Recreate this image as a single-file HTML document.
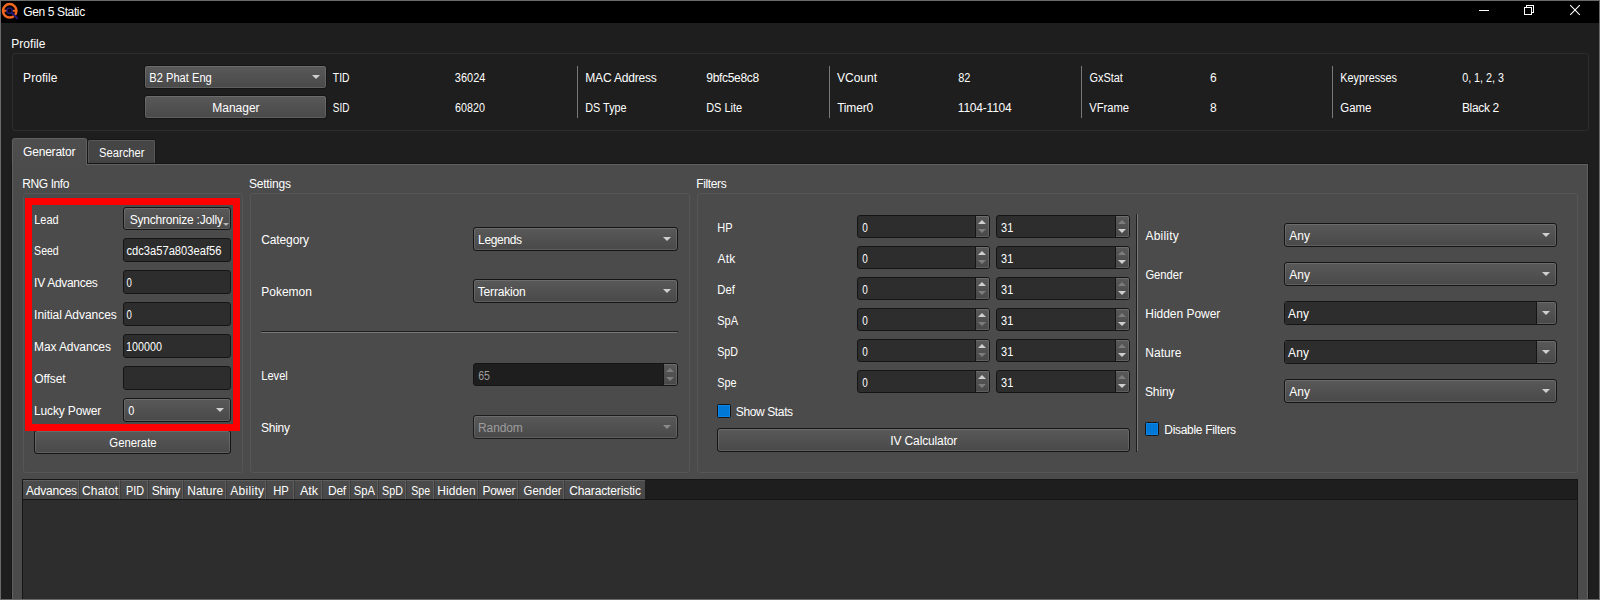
<!DOCTYPE html>
<html lang="en">
<head>
<meta charset="utf-8">
<title>Gen 5 Static</title>
<style>
html,body{margin:0;padding:0;}
body{width:1600px;height:600px;overflow:hidden;background:#1e1e1e;position:relative;font-family:"Liberation Sans",sans-serif;font-size:12px;color:#fff;}
.a{position:absolute;}
.t{position:absolute;white-space:nowrap;line-height:16px;height:16px;font-size:12px;color:#fff;transform-origin:0 0;}
.gb{position:absolute;box-sizing:border-box;border:1px solid #565656;border-radius:3px;}
.combo,.btn{position:absolute;box-sizing:border-box;border:1px solid #151515;border-radius:3px;background:linear-gradient(#595959,#494949);box-shadow:inset 0 0 0 1px rgba(255,255,255,0.118);}
.combo.dis{border-color:#1c1c1c;}
.edit{position:absolute;box-sizing:border-box;border:1px solid #151515;border-radius:3px;background:#2d2d2d;}
.sb{position:absolute;width:14px;box-sizing:border-box;border-left:1px solid #151515;background:linear-gradient(#595959,#494949);border-radius:0 2px 2px 0;box-shadow:inset -1px 0 0 rgba(255,255,255,0.118),inset 0 1px 0 rgba(255,255,255,0.118),inset 0 -1px 0 rgba(255,255,255,0.118);}
.ar{position:absolute;width:0;height:0;border-left:4px solid transparent;border-right:4px solid transparent;border-top:4px solid #dcdcdc;}
.au{position:absolute;width:0;height:0;border-left:4px solid transparent;border-right:4px solid transparent;border-bottom:4px solid #dcdcdc;}
.cb{position:absolute;box-sizing:border-box;background:#0078d7;border:1px solid #1a1512;border-radius:1.5px;box-shadow:inset 0 0 0 1px #0a84e6;}
.hc{position:absolute;top:480px;height:19px;box-sizing:border-box;background:linear-gradient(#4b4b4b,#474747);border-top:1px solid #606060;border-right:1px solid #3d3d3d;box-shadow:inset -1px 0 0 #5d5d5d;}
.hc.last{border-right:none;box-shadow:none;}
</style>
</head>
<body>
<div class="a" style="left:0;top:0;width:1600px;height:23px;background:#000;"></div>
<svg class="a" style="left:0;top:0" width="24" height="24" viewBox="0 0 24 24">
<circle cx="9.7" cy="10.8" r="6.7" fill="none" stroke="#f2661f" stroke-width="2.5"/>
<path d="M3.8 10.8H7M12.4 10.8H15.6" stroke="#f2661f" stroke-width="2" fill="none"/>
<circle cx="9.6" cy="10.7" r="2.6" fill="#000" stroke="#221872" stroke-width="1.5"/>
<path d="M11.6 12.8L17.2 18.3" stroke="#221872" stroke-width="2.2" stroke-linecap="round" fill="none"/>
</svg>
<svg class="a" style="left:1470px;top:0" width="130" height="23" viewBox="0 0 130 23" shape-rendering="crispEdges">
<rect x="9" y="10" width="10" height="1" fill="#fff"/>
<rect x="54.5" y="7.5" width="7" height="7" fill="none" stroke="#fff" stroke-width="1"/>
<path d="M56.5 7V5.5H63.5V12.5H62" fill="none" stroke="#fff" stroke-width="1"/>
<path d="M100.2 5.2L109.8 14.8M109.8 5.2L100.2 14.8" stroke="#fff" stroke-width="1.05" fill="none" shape-rendering="geometricPrecision"/>
</svg>
<div class="gb" style="left:12px;top:53px;width:1577px;height:78px;border-color:#2c2c2c;"></div>
<div class="combo" style="left:144px;top:65px;width:183px;height:24px;"></div>
<div class="ar" style="left:312px;top:75px;border-top-color:#cfcfcf;"></div>
<div class="btn" style="left:144px;top:95px;width:183px;height:24px;"></div>
<div class="a" style="left:577px;top:66px;width:1px;height:52px;background:#787878;"></div>
<div class="a" style="left:829px;top:66px;width:1px;height:52px;background:#787878;"></div>
<div class="a" style="left:1081px;top:66px;width:1px;height:52px;background:#787878;"></div>
<div class="a" style="left:1332px;top:66px;width:1px;height:52px;background:#787878;"></div>
<div class="a" style="left:11px;top:163px;width:1578px;height:440px;box-sizing:border-box;border:1px solid #161616;background:#4b4b4b;"></div>
<div class="a" style="left:12px;top:164px;width:1576px;height:440px;box-sizing:border-box;border:1px solid #606060;"></div>
<div class="a" style="left:87px;top:139px;width:69px;height:25px;box-sizing:border-box;border:1px solid #161616;border-radius:3px 3px 0 0;background:linear-gradient(#454545 0%,#454545 85%,#414141 100%);"></div>
<div class="a" style="left:88px;top:140px;width:67px;height:23px;box-sizing:border-box;border:1px solid #585858;border-bottom:none;border-radius:2px 2px 0 0;"></div>
<div class="a" style="left:12px;top:138px;width:75px;height:27px;box-sizing:border-box;border:1px solid #606060;border-bottom:none;border-radius:3px 3px 0 0;background:linear-gradient(#4e4e4e,#4b4b4b);"></div>
<div class="gb" style="left:23px;top:193px;width:220px;height:280px;"></div>
<div class="gb" style="left:250px;top:193px;width:440px;height:280px;"></div>
<div class="gb" style="left:697px;top:193px;width:881px;height:280px;"></div>
<div class="combo" style="left:123px;top:207px;width:108px;height:23px;"></div>
<div class="a" style="left:223px;top:223px;width:0;height:0;border-left:3px solid transparent;border-right:3px solid transparent;border-top:3px solid #b4b4b4;"></div>
<div class="edit" style="left:123px;top:238px;width:108px;height:24px;"></div>
<div class="edit" style="left:123px;top:270px;width:108px;height:24px;"></div>
<div class="edit" style="left:123px;top:302px;width:108px;height:24px;"></div>
<div class="edit" style="left:123px;top:334px;width:108px;height:24px;"></div>
<div class="edit" style="left:123px;top:366px;width:108px;height:24px;"></div>
<div class="combo" style="left:123px;top:398px;width:108px;height:24px;"></div>
<div class="ar" style="left:216px;top:408px;border-top-color:#cfcfcf;"></div>
<div class="btn" style="left:34px;top:430px;width:197px;height:24px;"></div>
<div class="a" style="left:25px;top:198px;width:215px;height:233px;box-sizing:border-box;border:7px solid #ff0000;"></div>
<div class="combo" style="left:473px;top:227px;width:205px;height:24px;"></div>
<div class="ar" style="left:663px;top:237px;border-top-color:#cfcfcf;"></div>
<div class="combo" style="left:473px;top:279px;width:205px;height:24px;"></div>
<div class="ar" style="left:663px;top:289px;border-top-color:#cfcfcf;"></div>
<div class="a" style="left:261px;top:331px;width:417px;height:1px;background:#1e1e1e;"></div>
<div class="a" style="left:261px;top:332px;width:416px;height:1px;background:#787878;"></div>
<div class="edit" style="left:473px;top:363px;width:205px;height:23px;background:#1e1e1e;"></div>
<div class="sb" style="left:663px;top:364px;height:21px;"></div>
<div class="au" style="left:666px;top:368px;border-bottom-color:#7c7c7c;"></div>
<div class="ar" style="left:666px;top:377px;border-top-color:#7c7c7c;"></div>
<div class="combo dis" style="left:473px;top:415px;width:205px;height:24px;"></div>
<div class="ar" style="left:663px;top:425px;border-top-color:#8a8a8a;"></div>
<div class="edit" style="left:857px;top:215px;width:133px;height:23px;background:#2d2d2d;"></div>
<div class="sb" style="left:975px;top:216px;height:21px;"></div>
<div class="au" style="left:978px;top:220px;border-bottom-color:#cfcfcf;"></div>
<div class="ar" style="left:978px;top:229px;border-top-color:#7c7c7c;"></div>
<div class="edit" style="left:996px;top:215px;width:134px;height:23px;background:#2d2d2d;"></div>
<div class="sb" style="left:1115px;top:216px;height:21px;"></div>
<div class="au" style="left:1118px;top:220px;border-bottom-color:#7c7c7c;"></div>
<div class="ar" style="left:1118px;top:229px;border-top-color:#cfcfcf;"></div>
<div class="edit" style="left:857px;top:246px;width:133px;height:23px;background:#2d2d2d;"></div>
<div class="sb" style="left:975px;top:247px;height:21px;"></div>
<div class="au" style="left:978px;top:251px;border-bottom-color:#cfcfcf;"></div>
<div class="ar" style="left:978px;top:260px;border-top-color:#7c7c7c;"></div>
<div class="edit" style="left:996px;top:246px;width:134px;height:23px;background:#2d2d2d;"></div>
<div class="sb" style="left:1115px;top:247px;height:21px;"></div>
<div class="au" style="left:1118px;top:251px;border-bottom-color:#7c7c7c;"></div>
<div class="ar" style="left:1118px;top:260px;border-top-color:#cfcfcf;"></div>
<div class="edit" style="left:857px;top:277px;width:133px;height:23px;background:#2d2d2d;"></div>
<div class="sb" style="left:975px;top:278px;height:21px;"></div>
<div class="au" style="left:978px;top:282px;border-bottom-color:#cfcfcf;"></div>
<div class="ar" style="left:978px;top:291px;border-top-color:#7c7c7c;"></div>
<div class="edit" style="left:996px;top:277px;width:134px;height:23px;background:#2d2d2d;"></div>
<div class="sb" style="left:1115px;top:278px;height:21px;"></div>
<div class="au" style="left:1118px;top:282px;border-bottom-color:#7c7c7c;"></div>
<div class="ar" style="left:1118px;top:291px;border-top-color:#cfcfcf;"></div>
<div class="edit" style="left:857px;top:308px;width:133px;height:23px;background:#2d2d2d;"></div>
<div class="sb" style="left:975px;top:309px;height:21px;"></div>
<div class="au" style="left:978px;top:313px;border-bottom-color:#cfcfcf;"></div>
<div class="ar" style="left:978px;top:322px;border-top-color:#7c7c7c;"></div>
<div class="edit" style="left:996px;top:308px;width:134px;height:23px;background:#2d2d2d;"></div>
<div class="sb" style="left:1115px;top:309px;height:21px;"></div>
<div class="au" style="left:1118px;top:313px;border-bottom-color:#7c7c7c;"></div>
<div class="ar" style="left:1118px;top:322px;border-top-color:#cfcfcf;"></div>
<div class="edit" style="left:857px;top:339px;width:133px;height:23px;background:#2d2d2d;"></div>
<div class="sb" style="left:975px;top:340px;height:21px;"></div>
<div class="au" style="left:978px;top:344px;border-bottom-color:#cfcfcf;"></div>
<div class="ar" style="left:978px;top:353px;border-top-color:#7c7c7c;"></div>
<div class="edit" style="left:996px;top:339px;width:134px;height:23px;background:#2d2d2d;"></div>
<div class="sb" style="left:1115px;top:340px;height:21px;"></div>
<div class="au" style="left:1118px;top:344px;border-bottom-color:#7c7c7c;"></div>
<div class="ar" style="left:1118px;top:353px;border-top-color:#cfcfcf;"></div>
<div class="edit" style="left:857px;top:370px;width:133px;height:23px;background:#2d2d2d;"></div>
<div class="sb" style="left:975px;top:371px;height:21px;"></div>
<div class="au" style="left:978px;top:375px;border-bottom-color:#cfcfcf;"></div>
<div class="ar" style="left:978px;top:384px;border-top-color:#7c7c7c;"></div>
<div class="edit" style="left:996px;top:370px;width:134px;height:23px;background:#2d2d2d;"></div>
<div class="sb" style="left:1115px;top:371px;height:21px;"></div>
<div class="au" style="left:1118px;top:375px;border-bottom-color:#7c7c7c;"></div>
<div class="ar" style="left:1118px;top:384px;border-top-color:#cfcfcf;"></div>
<div class="cb" style="left:717px;top:404px;width:14px;height:14px;"></div>
<div class="btn" style="left:717px;top:428px;width:413px;height:24px;"></div>
<div class="a" style="left:1136px;top:214px;width:1px;height:238px;background:#1e1e1e;"></div>
<div class="a" style="left:1137px;top:214px;width:1px;height:237px;background:#787878;"></div>
<div class="combo" style="left:1284px;top:223px;width:273px;height:24px;"></div>
<div class="ar" style="left:1542px;top:233px;border-top-color:#cfcfcf;"></div>
<div class="combo" style="left:1284px;top:262px;width:273px;height:24px;"></div>
<div class="ar" style="left:1542px;top:272px;border-top-color:#cfcfcf;"></div>
<div class="combo" style="left:1284px;top:301px;width:273px;height:24px;"></div>
<div class="a" style="left:1285px;top:302px;width:251px;height:22px;background:#2d2d2d;border-radius:2px 0 0 2px;"></div>
<div class="a" style="left:1536px;top:302px;width:1px;height:22px;background:#151515;"></div>
<div class="ar" style="left:1542px;top:311px;border-top-color:#cfcfcf;"></div>
<div class="combo" style="left:1284px;top:340px;width:273px;height:24px;"></div>
<div class="a" style="left:1285px;top:341px;width:251px;height:22px;background:#2d2d2d;border-radius:2px 0 0 2px;"></div>
<div class="a" style="left:1536px;top:341px;width:1px;height:22px;background:#151515;"></div>
<div class="ar" style="left:1542px;top:350px;border-top-color:#cfcfcf;"></div>
<div class="combo" style="left:1284px;top:379px;width:273px;height:24px;"></div>
<div class="ar" style="left:1542px;top:389px;border-top-color:#cfcfcf;"></div>
<div class="cb" style="left:1145px;top:422px;width:14px;height:14px;"></div>
<div class="a" style="left:22px;top:479px;width:1556px;height:125px;box-sizing:border-box;border:1px solid #161616;background:#2d2d2d;"></div>
<div class="a" style="left:23px;top:480px;width:1554px;height:19px;background:#1e1e1e;"></div>
<div class="a" style="left:23px;top:499px;width:1554px;height:1px;background:#151515;"></div>
<div class="hc" style="left:23px;width:57px;"></div>
<div class="hc" style="left:80px;width:41px;"></div>
<div class="hc" style="left:121px;width:28px;"></div>
<div class="hc" style="left:149px;width:35px;"></div>
<div class="hc" style="left:184px;width:43px;"></div>
<div class="hc" style="left:227px;width:40px;"></div>
<div class="hc" style="left:267px;width:28px;"></div>
<div class="hc" style="left:295px;width:28px;"></div>
<div class="hc" style="left:323px;width:28px;"></div>
<div class="hc" style="left:351px;width:28px;"></div>
<div class="hc" style="left:379px;width:28px;"></div>
<div class="hc" style="left:407px;width:28px;"></div>
<div class="hc" style="left:435px;width:44px;"></div>
<div class="hc" style="left:479px;width:40px;"></div>
<div class="hc" style="left:519px;width:46px;"></div>
<div class="hc last" style="left:565px;width:80px;"></div>
<div class="t" style="left:23.34px;top:4px;letter-spacing:-0.384px;">Gen 5 Static</div>
<div class="t" style="left:11.28px;top:36px;letter-spacing:0.036px;">Profile</div>
<div class="t" style="left:23.10px;top:70px;letter-spacing:0.066px;">Profile</div>
<div class="t" style="left:149px;top:70px;transform:translateX(0.24px) scaleX(0.9282);">B2 Phat Eng</div>
<div class="t" style="left:212.27px;top:100px;letter-spacing:-0.016px;">Manager</div>
<div class="t" style="left:332px;top:70px;transform:translateX(0.87px) scaleX(0.8613);">TID</div>
<div class="t" style="left:332px;top:100px;transform:translateX(0.79px) scaleX(0.8267);">SID</div>
<div class="t" style="left:454px;top:70px;transform:translateX(0.87px) scaleX(0.9123);">36024</div>
<div class="t" style="left:455px;top:100px;transform:translateX(0.10px) scaleX(0.8915);">60820</div>
<div class="t" style="left:585.27px;top:70px;letter-spacing:-0.176px;">MAC Address</div>
<div class="t" style="left:585px;top:100px;transform:translateX(0.30px) scaleX(0.9007);">DS Type</div>
<div class="t" style="left:706.33px;top:70px;letter-spacing:-0.312px;">9bfc5e8c8</div>
<div class="t" style="left:706px;top:100px;transform:translateX(0.19px) scaleX(0.9147);">DS Lite</div>
<div class="t" style="left:836.94px;top:70px;letter-spacing:0.019px;">VCount</div>
<div class="t" style="left:837.14px;top:100px;letter-spacing:-0.152px;">Timer0</div>
<div class="t" style="left:958px;top:70px;transform:translateX(0.19px) scaleX(0.9110);">82</div>
<div class="t" style="left:957.82px;top:100px;letter-spacing:-0.209px;">1104-1104</div>
<div class="t" style="left:1089px;top:70px;transform:translateX(0.39px) scaleX(0.9130);">GxStat</div>
<div class="t" style="left:1089px;top:100px;transform:translateX(0.25px) scaleX(0.9338);">VFrame</div>
<div class="t" style="left:1209.89px;top:70px;">6</div>
<div class="t" style="left:1210.07px;top:100px;">8</div>
<div class="t" style="left:1340px;top:70px;transform:translateX(0.30px) scaleX(0.9038);">Keypresses</div>
<div class="t" style="left:1340px;top:100px;transform:translateX(0.31px) scaleX(0.9541);">Game</div>
<div class="t" style="left:1462px;top:70px;transform:translateX(0.18px) scaleX(0.8941);">0, 1, 2, 3</div>
<div class="t" style="left:1461.95px;top:100px;letter-spacing:-0.341px;">Black 2</div>
<div class="t" style="left:23.07px;top:144px;letter-spacing:-0.205px;">Generator</div>
<div class="t" style="left:99px;top:145px;transform:translateX(0.08px) scaleX(0.9327);">Searcher</div>
<div class="t" style="left:22.28px;top:176px;letter-spacing:-0.410px;">RNG Info</div>
<div class="t" style="left:248.89px;top:176px;letter-spacing:-0.171px;">Settings</div>
<div class="t" style="left:696.28px;top:176px;letter-spacing:-0.366px;">Filters</div>
<div class="t" style="left:34px;top:212px;transform:translateX(0.19px) scaleX(0.9129);">Lead</div>
<div class="t" style="left:129.73px;top:212px;letter-spacing:-0.207px;">Synchronize :Jolly</div>
<div class="t" style="left:34px;top:243px;transform:translateX(0.11px) scaleX(0.8777);">Seed</div>
<div class="t" style="left:126px;top:243px;transform:translateX(0.43px) scaleX(0.9304);">cdc3a57a803eaf56</div>
<div class="t" style="left:34.11px;top:275px;letter-spacing:-0.303px;">IV Advances</div>
<div class="t" style="left:126px;top:275px;transform:translateX(0.44px) scaleX(0.8000);">0</div>
<div class="t" style="left:34.11px;top:307px;letter-spacing:-0.049px;">Initial Advances</div>
<div class="t" style="left:126px;top:307px;transform:translateX(0.44px) scaleX(0.8000);">0</div>
<div class="t" style="left:34.10px;top:339px;letter-spacing:-0.113px;">Max Advances</div>
<div class="t" style="left:126px;top:339px;transform:translateX(0.03px) scaleX(0.8952);">100000</div>
<div class="t" style="left:34.30px;top:371px;letter-spacing:-0.093px;">Offset</div>
<div class="t" style="left:34.10px;top:403px;letter-spacing:-0.160px;">Lucky Power</div>
<div class="t" style="left:128px;top:403px;transform:translateX(0.15px) scaleX(0.9106);">0</div>
<div class="t" style="left:109px;top:435px;transform:translateX(0.37px) scaleX(0.9442);">Generate</div>
<div class="t" style="left:261.31px;top:232px;letter-spacing:-0.134px;">Category</div>
<div class="t" style="left:478.10px;top:232px;letter-spacing:-0.339px;">Legends</div>
<div class="t" style="left:261.28px;top:284px;letter-spacing:-0.017px;">Pokemon</div>
<div class="t" style="left:477.81px;top:284px;letter-spacing:-0.190px;">Terrakion</div>
<div class="t" style="left:261px;top:368px;transform:translateX(0.24px) scaleX(0.9271);">Level</div>
<div class="t" style="left:478px;top:368px;transform:translateX(0.13px) scaleX(0.8808);color:#9d9d9d;">65</div>
<div class="t" style="left:261.03px;top:420px;letter-spacing:-0.247px;">Shiny</div>
<div class="t" style="left:478.10px;top:420px;letter-spacing:-0.150px;color:#9d9d9d;">Random</div>
<div class="t" style="left:717px;top:220px;transform:translateX(0.24px) scaleX(0.9165);">HP</div>
<div class="t" style="left:862px;top:220px;transform:translateX(0.28px) scaleX(0.8323);">0</div>
<div class="t" style="left:1001px;top:220px;transform:translateX(0.04px) scaleX(0.9131);">31</div>
<div class="t" style="left:717.47px;top:251px;letter-spacing:0.180px;">Atk</div>
<div class="t" style="left:862px;top:251px;transform:translateX(0.28px) scaleX(0.8323);">0</div>
<div class="t" style="left:1001px;top:251px;transform:translateX(0.04px) scaleX(0.9131);">31</div>
<div class="t" style="left:717px;top:282px;transform:translateX(0.24px) scaleX(0.9417);">Def</div>
<div class="t" style="left:862px;top:282px;transform:translateX(0.28px) scaleX(0.8323);">0</div>
<div class="t" style="left:1001px;top:282px;transform:translateX(0.04px) scaleX(0.9131);">31</div>
<div class="t" style="left:717px;top:313px;transform:translateX(0.16px) scaleX(0.9190);">SpA</div>
<div class="t" style="left:862px;top:313px;transform:translateX(0.28px) scaleX(0.8323);">0</div>
<div class="t" style="left:1001px;top:313px;transform:translateX(0.04px) scaleX(0.9131);">31</div>
<div class="t" style="left:717px;top:344px;transform:translateX(0.26px) scaleX(0.8879);">SpD</div>
<div class="t" style="left:862px;top:344px;transform:translateX(0.28px) scaleX(0.8323);">0</div>
<div class="t" style="left:1001px;top:344px;transform:translateX(0.04px) scaleX(0.9131);">31</div>
<div class="t" style="left:717px;top:375px;transform:translateX(0.24px) scaleX(0.9022);">Spe</div>
<div class="t" style="left:862px;top:375px;transform:translateX(0.28px) scaleX(0.8323);">0</div>
<div class="t" style="left:1001px;top:375px;transform:translateX(0.04px) scaleX(0.9131);">31</div>
<div class="t" style="left:735.76px;top:404px;letter-spacing:-0.372px;">Show Stats</div>
<div class="t" style="left:890.35px;top:433px;letter-spacing:-0.140px;">IV Calculator</div>
<div class="t" style="left:1145.47px;top:228px;letter-spacing:0.216px;">Ability</div>
<div class="t" style="left:1289.14px;top:228px;letter-spacing:0.116px;">Any</div>
<div class="t" style="left:1145px;top:267px;transform:translateX(0.39px) scaleX(0.9342);">Gender</div>
<div class="t" style="left:1289.14px;top:267px;letter-spacing:0.116px;">Any</div>
<div class="t" style="left:1145.28px;top:306px;letter-spacing:-0.025px;">Hidden Power</div>
<div class="t" style="left:1288.03px;top:306px;letter-spacing:0.172px;">Any</div>
<div class="t" style="left:1145.27px;top:345px;letter-spacing:0.045px;">Nature</div>
<div class="t" style="left:1288.03px;top:345px;letter-spacing:0.172px;">Any</div>
<div class="t" style="left:1145.03px;top:384px;letter-spacing:-0.157px;">Shiny</div>
<div class="t" style="left:1289.14px;top:384px;letter-spacing:0.116px;">Any</div>
<div class="t" style="left:1164.28px;top:422px;letter-spacing:-0.301px;">Disable Filters</div>
<div class="t" style="left:26.03px;top:483px;letter-spacing:-0.230px;">Advances</div>
<div class="t" style="left:82.08px;top:483px;letter-spacing:0.117px;">Chatot</div>
<div class="t" style="left:126px;top:483px;transform:translateX(0.03px) scaleX(0.8991);">PID</div>
<div class="t" style="left:151.73px;top:483px;letter-spacing:-0.346px;">Shiny</div>
<div class="t" style="left:187.27px;top:483px;letter-spacing:-0.032px;">Nature</div>
<div class="t" style="left:230.14px;top:483px;letter-spacing:0.318px;">Ability</div>
<div class="t" style="left:273px;top:483px;transform:translateX(0.19px) scaleX(0.9369);">HP</div>
<div class="t" style="left:299px;top:483px;transform:translateX(0.92px) scaleX(1.0476);">Atk</div>
<div class="t" style="left:328.10px;top:483px;letter-spacing:-0.318px;">Def</div>
<div class="t" style="left:353px;top:483px;transform:translateX(0.85px) scaleX(0.9325);">SpA</div>
<div class="t" style="left:382px;top:483px;transform:translateX(0.11px) scaleX(0.8935);">SpD</div>
<div class="t" style="left:411px;top:483px;transform:translateX(0.16px) scaleX(0.8860);">Spe</div>
<div class="t" style="left:437.32px;top:483px;letter-spacing:0.059px;">Hidden</div>
<div class="t" style="left:482.42px;top:483px;letter-spacing:-0.247px;">Power</div>
<div class="t" style="left:523px;top:483px;transform:translateX(0.59px) scaleX(0.9477);">Gender</div>
<div class="t" style="left:569.17px;top:483px;letter-spacing:-0.125px;">Characteristic</div>
<div class="a" style="left:0;top:0;width:1600px;height:600px;box-sizing:border-box;border:1px solid #6a6a6a;"></div>
</body>
</html>
